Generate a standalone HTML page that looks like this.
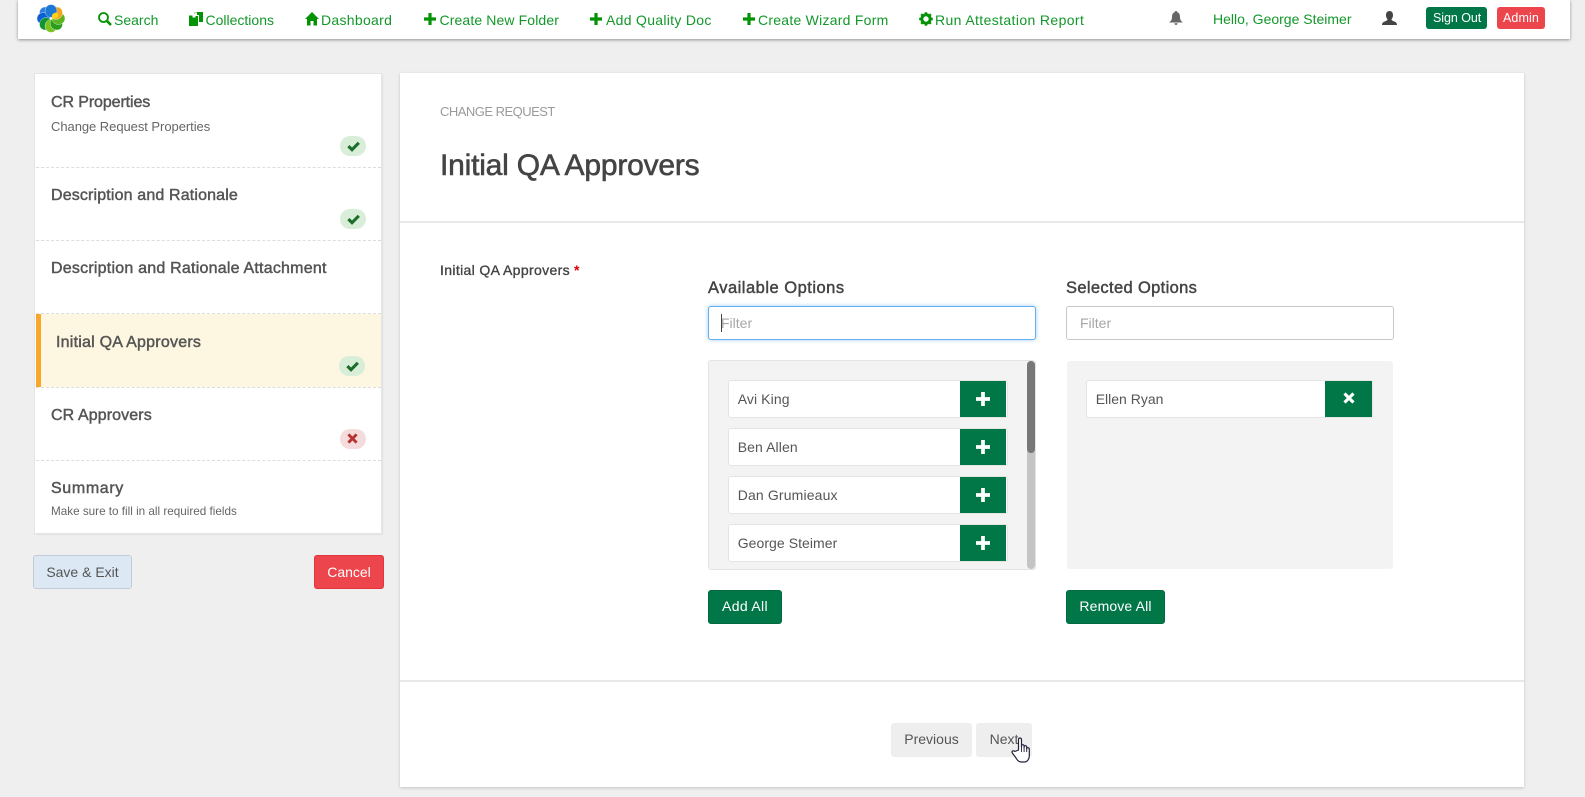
<!DOCTYPE html>
<html lang="en">
<head>
<meta charset="utf-8">
<title>Initial QA Approvers</title>
<style>
html,body{margin:0;padding:0;background:#efefef;}
body{position:relative;width:1585px;height:797px;overflow:hidden;font-family:"Liberation Sans",Arial,sans-serif;font-size:14px;color:#555;}
.a,.t,.i,button,input{position:absolute;}
.t{white-space:nowrap;line-height:20px;}
.nav{left:18px;top:0;width:1552px;height:39px;background:#fff;box-shadow:0 1px 3px rgba(0,0,0,.4);}
.n{color:#12982a;top:10px;font-size:14px;}
.i{display:block;}
.g{fill:#049304;}
.card{left:35px;top:74px;width:346px;height:459px;background:#fff;box-shadow:0 0 0 1px #e4e4e4,1px 1px 2px rgba(0,0,0,.14);}
.dash{left:36px;width:345px;height:0;border-top:1px dashed #ddd;}
.h{font-size:16px;color:#555;-webkit-text-stroke:.45px #555;}
.badge{width:26px;height:20px;border-radius:10px;background:#d9eed8;}
.badge.x{background:#f4dcdc;}
.btn{display:block;border:1px solid #016a40;background:#017748;color:#fff;border-radius:3px;height:34px;padding:0;font:14px/20px "Liberation Sans",Arial,sans-serif;box-sizing:border-box;text-align:center;}
.up{padding-bottom:2px;}
.main{left:400px;top:73px;width:1124px;height:714px;background:#fff;box-shadow:0 1px 3px rgba(0,0,0,.18);}
.rule{left:400px;width:1124px;height:2px;background:#e8e8e8;}
.filter{box-sizing:border-box;height:34px;background:#fff;border:1px solid #c8c8c8;border-radius:3px;padding:0 12px;font:14px "Liberation Sans",Arial,sans-serif;outline:0;}
.filter::placeholder{color:#a6a6a6;opacity:1;}
.panel{background:#f3f3f3;border-radius:3px;box-sizing:border-box;}
.row{height:38px;background:#fff;border:1px solid #e4e4e4;border-radius:3px;box-sizing:border-box;}
.sq{background:#017748;width:46px;height:36px;}
.name{font-size:14px;color:#555;}
.lab{font-size:16.5px;color:#444;-webkit-text-stroke:.45px #444;}
</style>
</head>
<body>
<svg width="0" height="0" style="position:absolute">
<defs>
<symbol id="plus" viewBox="0 0 12 12"><path d="M4.400 0h3.200v4.400H12v3.200H7.600V12H4.400V7.600H0V4.400h4.400z"/></symbol>
<symbol id="cross" viewBox="0 0 12 12"><path d="M2.600.4 6 3.800 9.400.4l2.200 2.200L8.200 6l3.400 3.400-2.200 2.200L6 8.200l-3.400 3.400L.4 9.400 3.800 6 .4 2.600z"/></symbol>
<symbol id="check" viewBox="0 0 14 12"><path d="M11.600.8 14 3.200 5.400 11.800.2 6.800l2.400-2.400 2.800 2.700z"/></symbol>
</defs>
</svg>

<div class="a nav"></div>
<svg class="i" style="left:37px;top:4px" width="28" height="29" viewBox="-14 -14.500 28 29">
<g stroke="#fff" stroke-width=".35">
<ellipse cx="0" cy="-7.500" rx="6" ry="6.500" fill="#2a7de0" transform="rotate(315)"/>
<ellipse cx="0" cy="-7.500" rx="6" ry="6.500" fill="#0a5fd2" transform="rotate(270)"/>
<ellipse cx="0" cy="-7.500" rx="6" ry="6.500" fill="#0f9431" transform="rotate(225)"/>
<ellipse cx="0" cy="-7.500" rx="6" ry="6.500" fill="#79c322" transform="rotate(180)"/>
<ellipse cx="0" cy="-7.500" rx="6" ry="6.500" fill="#2a9d1a" transform="rotate(135)"/>
<ellipse cx="0" cy="-7.500" rx="6" ry="6.500" fill="#5bb51e" transform="rotate(90)"/>
<ellipse cx="0" cy="-7.500" rx="6" ry="6.500" fill="#f7a21b" transform="rotate(45)"/>
<ellipse cx="0" cy="-7.500" rx="6" ry="6.500" fill="#1b78d6"/>
</g>
<ellipse cx="0" cy="-5" rx="2.800" ry="3.500" fill="#ffd21a" transform="rotate(55)"/>
<circle r="1.200" fill="#fff"/>
</svg>

<svg class="i g" style="left:98px;top:12px" width="14" height="14" viewBox="0 0 14 14"><circle cx="5.500" cy="5.500" r="4.500" fill="none" stroke="#049304" stroke-width="1.800"/><path d="M8.700 8.700 13 13" stroke="#049304" stroke-width="2.600" fill="none"/></svg>
<span class="t n" style="left:114px">Search</span>

<svg class="i g" style="left:189px;top:12px" width="14" height="14" viewBox="0 0 14 14"><path d="M0 3.500h3.500V5.500h3V4H9v10H0z"/><path d="M5.500 2V0.500h2.500V3H10v7h4V0H7z"/><path d="M3.800 3.500 6.500 5.200H3.800z" fill="#fff"/></svg>
<span class="t n" style="left:205.500px">Collections</span>

<svg class="i g" style="left:305px;top:12px" width="14" height="14" viewBox="0 0 14 14"><path d="M7 0 14 7h-2v6.500H8.500V9h-3v4.500H2V7H0z"/></svg>
<span class="t n" style="left:321px;letter-spacing:.3px">Dashboard</span>

<svg class="i g" style="left:424px;top:13px" width="12" height="12"><use href="#plus"/></svg>
<span class="t n" style="left:439.500px;letter-spacing:.12px">Create New Folder</span>

<svg class="i g" style="left:590px;top:13px" width="12" height="12"><use href="#plus"/></svg>
<span class="t n" style="left:606px;letter-spacing:.3px">Add Quality Doc</span>

<svg class="i g" style="left:743px;top:13px" width="12" height="12"><use href="#plus"/></svg>
<span class="t n" style="left:758px;letter-spacing:.25px">Create Wizard Form</span>

<svg class="i" style="left:919px;top:11.500px" width="14" height="14" viewBox="0 0 14 14"><circle cx="7" cy="7" r="4.200" fill="none" stroke="#049304" stroke-width="3"/><path d="M7 .2v13.600M.2 7h13.600M2.200 2.200l9.600 9.600M11.800 2.200l-9.600 9.600" stroke="#049304" stroke-width="2.400" stroke-dasharray="2.700 8.200"/></svg>
<span class="t n" style="left:935px;letter-spacing:.38px">Run Attestation Report</span>

<svg class="i" style="left:1169px;top:11px" width="14" height="14" viewBox="0 0 14 14"><path d="M7 0C8 0 8.300.6 8.300 1.300 10.500 2 11 4 11 6.500 11 9 12.500 10.500 14 11.500H0C1.500 10.500 3 9 3 6.500 3 4 3.500 2 5.700 1.300 5.700.6 6 0 7 0z" fill="#666"/><path d="M5.300 12.300h3.400C8.500 13.500 7.800 14 7 14S5.500 13.500 5.300 12.300z" fill="#666"/></svg>
<span class="t n" style="left:1213px;top:8.500px">Hello, George Steimer</span>

<svg class="i" style="left:1382px;top:11px" width="15" height="14" viewBox="0 0 15 14"><path d="M7.500 0C10 0 11 2 11 4.200 11 6 10.200 7.400 9.500 8.200 9.500 9.500 11 9.800 13 10.800 14.500 11.500 15 12.800 15 14H0C0 12.800.5 11.500 2 10.800 4 9.800 5.500 9.500 5.500 8.200 4.800 7.400 4 6 4 4.200 4 2 5 0 7.500 0z" fill="#444"/></svg>

<span class="a" style="left:1426px;top:7px;width:61px;height:22px;background:#017748;border-radius:3px;"></span>
<span class="t" style="left:1433px;top:8px;color:#fff;font-size:12.500px;letter-spacing:-.06px">Sign Out</span>
<span class="a" style="left:1497px;top:7px;width:48px;height:22px;background:#ec454c;border-radius:3px;"></span>
<span class="t" style="left:1503px;top:8px;color:#fff;font-size:12.500px;letter-spacing:.1px">Admin</span>

<!-- sidebar -->
<div class="a card"></div>
<div class="a" style="left:36px;top:314px;width:345px;height:73px;background:#fdf6e0;"></div>
<div class="a" style="left:36px;top:314px;width:5px;height:73px;background:#f9a72b;"></div>
<div class="a dash" style="top:167px"></div>
<div class="a dash" style="top:240px"></div>
<div class="a dash" style="top:313px"></div>
<div class="a dash" style="top:387px"></div>
<div class="a dash" style="top:460px"></div>

<span class="t h" style="left:51px;top:92.500px;letter-spacing:-.1px">CR Properties</span>
<span class="t" style="left:51px;top:116.500px;font-size:13px;color:#666;letter-spacing:-.05px">Change Request Properties</span>
<div class="a badge" style="left:340px;top:136px"></div>
<svg class="i" style="left:347px;top:141px;fill:#1c6e2c" width="13" height="11"><use href="#check"/></svg>

<span class="t h" style="left:51px;top:185.500px;letter-spacing:.15px">Description and Rationale</span>
<div class="a badge" style="left:340px;top:209px"></div>
<svg class="i" style="left:347px;top:214px;fill:#1c6e2c" width="13" height="11"><use href="#check"/></svg>

<span class="t h" style="left:51px;top:258.500px;letter-spacing:.22px">Description and Rationale Attachment</span>

<span class="t h" style="left:56px;top:333px;letter-spacing:.23px">Initial QA Approvers</span>
<div class="a badge" style="left:339px;top:356px"></div>
<svg class="i" style="left:346px;top:361px;fill:#1c6e2c" width="13" height="11"><use href="#check"/></svg>

<span class="t h" style="left:51px;top:405.500px;letter-spacing:.1px">CR Approvers</span>
<div class="a badge x" style="left:340px;top:429px"></div>
<svg class="i" style="left:347px;top:433px;fill:#b83232" width="11" height="11"><use href="#cross"/></svg>

<span class="t h" style="left:51px;top:479px;letter-spacing:.64px">Summary</span>
<span class="t" style="left:51px;top:502px;font-size:11.700px;color:#666">Make sure to fill in all required fields</span>

<button class="btn" style="left:33px;top:555px;width:99px;background:#dce9f5;border-color:#c3ccd6;color:#555;">Save &amp; Exit</button>
<button class="btn" style="left:314px;top:555px;width:70px;background:#ec454c;border-color:#e5343c;">Cancel</button>

<!-- main -->
<div class="a main"></div>
<div class="a rule" style="top:221px"></div>
<div class="a rule" style="top:680px"></div>

<span class="t" style="left:440px;top:102px;font-size:13px;color:#9a9a9a;letter-spacing:-.52px">CHANGE REQUEST</span>
<span class="t" style="left:440px;top:145.600px;line-height:40px;font-size:30px;color:#444;letter-spacing:-.2px;-webkit-text-stroke:.6px #444">Initial QA Approvers</span>
<span class="t" style="left:440px;top:259.500px;font-size:14px;color:#444;letter-spacing:.35px;-webkit-text-stroke:.35px #444">Initial QA Approvers</span>
<span class="t" style="left:574px;top:259.500px;font-size:14px;color:#e00000;font-weight:bold">*</span>

<span class="t lab" style="left:708px;top:277.500px;letter-spacing:.5px">Available Options</span>
<span class="t lab" style="left:1066px;top:277.500px;letter-spacing:.35px">Selected Options</span>

<input class="filter" style="left:708px;top:306px;width:328px;border-color:#62b0ee;box-shadow:0 0 4px rgba(102,175,233,.6);" placeholder="Filter">
<div class="a" style="left:721px;top:314px;width:1px;height:18px;background:#444;"></div>
<input class="filter" style="left:1066px;top:306px;width:328px;padding-left:13px;" placeholder="Filter">

<div class="a panel" style="left:708px;top:360px;width:328px;height:210px;border:1px solid #e3e3e3;"></div>
<div class="a" style="left:1027px;top:361px;width:8px;height:208px;background:#c4c4c4;border-radius:4px;"></div>
<div class="a" style="left:1027px;top:361px;width:8px;height:92px;background:#777;border-radius:4px;"></div>

<div class="a row" style="left:728px;top:380px;width:280px"></div>
<div class="a sq" style="left:960px;top:381px"></div>
<svg class="i" style="left:976px;top:391.500px;fill:#fff" width="14" height="14"><use href="#plus"/></svg>
<span class="t name" style="left:737.700px;top:388.500px;letter-spacing:.1px">Avi King</span>

<div class="a row" style="left:728px;top:428px;width:280px"></div>
<div class="a sq" style="left:960px;top:429px"></div>
<svg class="i" style="left:976px;top:439.500px;fill:#fff" width="14" height="14"><use href="#plus"/></svg>
<span class="t name" style="left:737.700px;top:436.500px;letter-spacing:.1px">Ben Allen</span>

<div class="a row" style="left:728px;top:476px;width:280px"></div>
<div class="a sq" style="left:960px;top:477px"></div>
<svg class="i" style="left:976px;top:487.500px;fill:#fff" width="14" height="14"><use href="#plus"/></svg>
<span class="t name" style="left:737.700px;top:484.500px;letter-spacing:.15px">Dan Grumieaux</span>

<div class="a row" style="left:728px;top:524px;width:280px"></div>
<div class="a sq" style="left:960px;top:525px"></div>
<svg class="i" style="left:976px;top:535.500px;fill:#fff" width="14" height="14"><use href="#plus"/></svg>
<span class="t name" style="left:737.700px;top:532.500px;letter-spacing:.06px">George Steimer</span>

<button class="btn up" style="left:708px;top:590px;width:74px;letter-spacing:.33px">Add All</button>

<div class="a panel" style="left:1067px;top:361px;width:326px;height:208px;"></div>
<div class="a row" style="left:1086px;top:380px;width:287px"></div>
<div class="a sq" style="left:1325px;top:381px;width:47px"></div>
<svg class="i" style="left:1343px;top:392px;fill:#fff" width="12" height="12"><use href="#cross"/></svg>
<span class="t name" style="left:1095.700px;top:388.500px">Ellen Ryan</span>

<button class="btn up" style="left:1066px;top:590px;width:99px;letter-spacing:.14px">Remove All</button>

<button class="btn up" style="left:891px;top:723px;width:81px;background:#eee;border-color:#eee;color:#555;">Previous</button>
<button class="btn up" style="left:976px;top:723px;width:56px;background:#eee;border-color:#eee;color:#555;">Next</button>

<svg class="i" style="left:1010px;top:735px" width="25" height="30" viewBox="0 0 25 30"><path d="M8.500 15V4.500a1.500 1.500 0 0 1 3 0V12V11a1.300 1.300 0 0 1 2.600 0v2v-1a1.300 1.300 0 0 1 2.600 0v2a1.300 1.300 0 0 1 2.600 0V21c0 3-2 6-5 6h-3c-3 0-4-2-6-5l-3-4c-1-2 1-3 2.500-1.500z" fill="#fff" stroke="#23233a" stroke-width="1.200" stroke-linejoin="round"/><path d="M11.500 12v5M14.100 13v4M16.700 14v3" stroke="#23233a" stroke-width=".9" fill="none"/></svg>
</body>
</html>
